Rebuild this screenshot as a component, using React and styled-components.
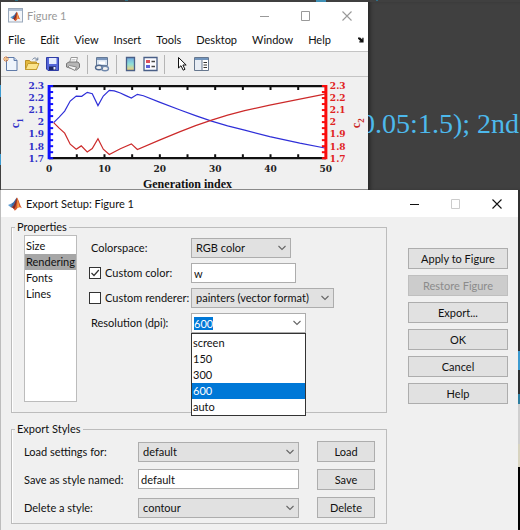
import React, { useEffect, useRef, useState } from "react";
import styled, { createGlobalStyle, css } from "styled-components";

const GlobalStyle = createGlobalStyle`
  * { box-sizing: border-box; }
  html, body { height: 100%; margin: 0; background: #404040; }
  body, button, input, select {
    font-family: Lato, "Open Sans", sans-serif;
    font-size: 11px;
    line-height: 16px;
    color: #111;
  }
  #root { min-height: 100%; display: flex; flex-direction: column; }
`;

/* ---------- desktop ---------- */

const Desktop = styled.main`
  flex: 1;
  display: flex;
  flex-direction: column;
  min-height: 100vh;
  padding-top: 2px;
  overflow: hidden;
  background:
    linear-gradient(#3f8fb4, #3f8fb4) 316px 0 / 10px 2px no-repeat,
    linear-gradient(#2d6f88, #2d6f88) 15px 0 / 3px 1px no-repeat,
    linear-gradient(#2d6f88, #2d6f88) 125px 0 / 3px 1px no-repeat,
    linear-gradient(#2d6f88, #2d6f88) 376px 0 / 2px 1px no-repeat,
    linear-gradient(#3d9bd0, #3d9bd0) 0 85px / 1px 12px no-repeat,
    linear-gradient(#3d9bd0, #3d9bd0) 0 154px / 1px 11px no-repeat,
    #404040;
`;

const BackRow = styled.div`
  display: flex;
  padding-left: 1px;
`;

const Backdrop = styled.div`
  flex: 1 1 0;
  min-width: 0;
  overflow: hidden;
  display: flex;
  justify-content: flex-end;
  align-items: center;
  padding: 56px 1px 0 0;
  white-space: nowrap;
  font: 28px/32px "Liberation Serif", serif;
  color: #4db9ec;
  box-shadow: inset 4px 0 4px -2px #262626;
`;

const FigureWindow = styled.section`
  flex: 0 1 367px;
  background: #f0f0f0;
  border-bottom: 1px solid #8a8a8a;
`;

const DialogRow = styled.div`
  flex: 1;
  display: flex;
  padding-right: 2px;
  background: linear-gradient(
    #303030 0 161px, #3d9bd0 161px 180px, #303030 180px 204px, #2d7fa0 204px 214px,
    #cfcfcf 214px 254px, #d8d4c0 254px 277px, #000 277px
  ) right / 2px 100% no-repeat;
`;

const DialogWindow = styled.section`
  flex: 1;
  background: #f0f0f0;
  border-left: 1px solid #bdbdbd;
`;

/* ---------- window chrome ---------- */

const TitleBar = styled.header`
  display: flex;
  align-items: center;
  height: 27px;
  padding: 0 ${(p) => p.$end}px 0 7px;
  background: #fff;
  color: ${(p) => (p.$inactive ? "#999" : "#111")};
`;

const Title = styled.h1`
  flex: 1;
  margin: 0 0 0 4px;
  font-size: 11px;
  font-weight: 400;
  white-space: nowrap;
`;

const WindowControls = styled.div`
  display: flex;
  gap: 25px;
`;

const ControlButton = styled.button`
  display: flex;
  padding: 0;
  border: 0;
  background: none;
  color: ${(p) => p.$tone};
`;

const MenuBar = styled.nav`
  display: flex;
  align-items: center;
  gap: 15px;
  height: 22px;
  padding: 0 4px 0 7px;
  background: #fff;
`;

const MenuItem = styled.button`
  padding: 0;
  border: 0;
  background: none;
  &:last-child { margin-left: auto; display: flex; }
`;

const Toolbar = styled.div`
  display: flex;
  align-items: center;
  gap: 5px;
  height: 26px;
  padding-left: 2px;
  border-top: 1px solid #c4c4c4;
  border-bottom: 1px solid #c4c4c4;
`;

const ToolButton = styled.button`
  display: flex;
  padding: 0;
  border: 0;
  background: none;
`;

const Separator = styled.span`
  width: 1px;
  height: 19px;
  margin: 0 1px;
  background: #b5b5b5;
`;

const Chart = styled.svg`
  display: block;
  width: 100%;
  height: auto;
`;

/* ---------- dialog parts ---------- */

const DialogBody = styled.div`
  display: flex;
  gap: 21px;
  padding: 3px 10px 5px 10px;
`;

const Panels = styled.div`
  flex: 1;
  min-width: 0;
  display: flex;
  flex-direction: column;
  gap: 9px;
`;

const Panel = styled.fieldset`
  min-width: 0;
  margin: 0;
  padding: 0;
  border: 1px solid #bcbcbc;
  box-shadow: inset 1px 0 #fff;
`;

const Legend = styled.legend`
  margin-left: 3px;
  padding: 0 2px;
  line-height: 14px;
`;

const PropertiesLayout = styled.div`
  display: flex;
  gap: 12px;
  padding: 1px 12px 10px;
`;

const CategoryList = styled.ul`
  flex: none;
  width: 53px;
  height: 167px;
  margin: 0;
  padding: 2px 0;
  list-style: none;
  background: #fff;
  border: 1px solid #bcbcbc;
`;

const Category = styled.button`
  display: block;
  width: 100%;
  padding: 0 1px;
  border: 0;
  text-align: left;
  white-space: nowrap;
  background: ${(p) => (p.$active ? "#a6a6a6" : "transparent")};
`;

const PropertyGrid = styled.div`
  flex: 1;
  display: grid;
  grid-template-columns: 102px auto;
  grid-auto-rows: 20px;
  align-content: start;
  justify-content: start;
  row-gap: 5px;
  padding-top: 3px;
`;

const StyleGrid = styled.div`
  display: grid;
  grid-template-columns: 114px 1fr 58px;
  grid-auto-rows: 21px;
  row-gap: 7px;
  padding: 5px 11px 5px 12px;
`;

const FieldLabel = styled.label`
  display: flex;
  align-items: center;
  gap: 4px;
  padding-left: ${(p) => (p.$indent ? "2px" : "0")};
  white-space: nowrap;
`;

const CheckBox = styled.input`
  appearance: none;
  flex: none;
  width: 12px;
  height: 12px;
  margin: 0;
  border: 1px solid #333;
  background: #fff;
  &:checked {
    background: #fff
      url("data:image/svg+xml,%3Csvg xmlns='http://www.w3.org/2000/svg' viewBox='0 0 10 10'%3E%3Cpath d='M1.5 5 4 7.5 8.8 2' fill='none' stroke='%23333' stroke-width='1.2'/%3E%3C/svg%3E")
      center / 10px 10px;
  }
`;

const frame = css`
  width: 100%;
  height: 20px;
  border: 1px solid #adadad;
  border-radius: 0;
`;

const SelectWrap = styled.div`
  display: grid;
  align-items: center;
  width: ${(p) => p.$width};
  & > * { grid-area: 1 / 1; }
  & > svg { justify-self: end; margin-right: 4px; pointer-events: none; }
`;

const Select = styled.select`
  ${frame}
  appearance: none;
  padding: 0 18px 0 4px;
  background: #e1e1e1;
`;

const TextField = styled.input`
  ${frame}
  width: ${(p) => p.$width};
  padding: 0 2px;
  background: #fff;
`;

const ComboBox = styled(SelectWrap)`
  position: relative;
`;

const ComboInput = styled.input`
  ${frame}
  padding: 0 2px;
  background: #fff;
  outline: none;
  &::selection { background: #0078d7; color: #fff; }
`;

const ComboList = styled.ul`
  position: absolute;
  z-index: 1;
  top: 100%;
  left: 0;
  right: 0;
  margin: 0;
  padding: 1px 0 0;
  list-style: none;
  background: #fff;
  border: 1px solid #333;
`;

const ComboOption = styled.li`
  padding-left: 1px;
  background: ${(p) => (p.$active ? "#0078d7" : "#fff")};
  color: ${(p) => (p.$active ? "#fff" : "#111")};
`;

const Actions = styled.div`
  flex: none;
  width: 100px;
  display: flex;
  flex-direction: column;
  gap: 6px;
  padding-top: 28px;
`;

const PushButton = styled.button`
  width: 100%;
  height: 21px;
  padding: 0;
  border: 1px solid #adadad;
  background: #e1e1e1;
  &:disabled { background: #ccc; border-color: #bfbfbf; color: #8b8b8b; }
`;

/* ---------- drawings ---------- */

const MatlabMark = () => (
  <>
    <path d="M0 8 4 6.2 6 8.2 3 10.5Z" fill="#5b9bd0" />
    <path d="M4 6.2C6 5.5 7 2 9 .5L7.5 7 5.8 9.4 3 10.5Z" fill="#3a6ca8" />
    <path d="M9 .4C10.5 1.8 12 8.5 14 11.2 12 10 10.5 9.8 9 11.5 8 13 7.2 13.5 6.5 13.5 6 11.8 5 10.8 3.5 10.3 6.5 9.3 7.2 4.2 9 .4Z" fill="#d8562a" />
    <path d="M9 .4C8.9 4 8.4 8.500 6 12.2 5.500 11.200 4.700 10.700 3.500 10.300 6.500 9.300 7.200 4.200 9 .4Z" fill="#7c2c2c" />
    <path d="M9.200 1.400C10.500 4 10.800 8 11.500 9.800L9 10.900C9.600 8 9.500 4 9.200 1.400Z" fill="#f5a549" />
  </>
);

const MatlabLogo = () => (
  <svg width="14" height="14" viewBox="0 0 14 14" aria-hidden="true"><MatlabMark /></svg>
);

const FigureLogo = () => (
  <svg width="15" height="15" viewBox="0 0 15 15" aria-hidden="true">
    <rect x=".5" y=".5" width="14" height="13.5" fill="#f3f6fa" stroke="#9aa9bb" />
    <path d="M1 1h13v2H1z" fill="#aebfd4" />
    <g transform="translate(2.3 3.4) scale(.72)"><MatlabMark /></g>
  </svg>
);

const MinimizeGlyph = () => (
  <svg width="16" height="12" viewBox="0 0 16 12"><path d="M3 6.5h9" stroke="currentColor" /></svg>
);
const MaximizeGlyph = () => (
  <svg width="16" height="12" viewBox="0 0 16 12"><path d="M3.5 1.5h8v9h-8z" fill="none" stroke="currentColor" /></svg>
);
const CloseGlyph = () => (
  <svg width="16" height="12" viewBox="0 0 16 12"><path d="m3.5 1.5 9 9m0-9-9 9" stroke="currentColor" strokeWidth="1.1" /></svg>
);
const Chevron = () => (
  <svg width="10" height="6" viewBox="0 0 10 6" aria-hidden="true"><path d="m1.5 1 3.5 3.5L8.5 1" fill="none" stroke="#666" strokeWidth="1.1" /></svg>
);
const DockArrow = () => (
  <svg width="6" height="6" viewBox="0 0 7 7"><path d="M0 .5h2.5L5 3V1h1.500v5.500H1.500V5H3L0 2Z" fill="#111" /></svg>
);

const NewIcon = () => (
  <svg width="16" height="16" viewBox="0 0 16 16">
    <path d="M3.5 1.5h7.5l3 3V14.500H3.500Z" fill="#eef4fc" stroke="#5f7aa8" />
    <path d="M11 1.500v3h3" fill="#c4d4ea" stroke="#5f7aa8" />
    <path d="M3 0v6M0 3h6M1 1l4 4m0-4L1 5" stroke="#d2793c" strokeWidth=".9" />
    <circle cx="3" cy="3" r="1" fill="#ffd98a" />
  </svg>
);
const OpenIcon = () => (
  <svg width="16" height="16" viewBox="0 0 16 16">
    <path d="M1.5 13.5v-9h4l1.200 1.500H12.500v7.500Z" fill="#e4b93e" stroke="#b98f24" />
    <path d="M1.500 13.500 4 7.500h11l-2.500 6Z" fill="#fbe48c" stroke="#c59c2e" />
    <path d="M8.500 3.500C10 1.500 12 1.500 13 3.500m.8-2V4h-2.500" fill="none" stroke="#5b718f" strokeWidth=".9" />
  </svg>
);
const SaveIcon = () => (
  <svg width="15" height="16" viewBox="0 0 15 16">
    <path d="M1.5 1.5h12v13H3l-1.500-1.500Z" fill="#5566d8" stroke="#2f3da5" />
    <path d="M4 2h7.500v6H4z" fill="#e6ecfd" />
    <path d="M4 10.500h7V14H4z" fill="#1c2460" /><path d="M8.500 11h2v2.500h-2z" fill="#e9edff" />
  </svg>
);
const PrintIcon = () => (
  <svg width="16" height="16" viewBox="0 0 16 16">
    <path d="M4.500 7 6 1.500h6.500L11 7Z" fill="#fff" stroke="#999" />
    <path d="M1.500 7.500 4 6h9l1.500 2v3.500l-3 2.500L1.500 11Z" fill="#b6b6b6" stroke="#777" />
    <path d="m3 11 1.500-1.500 7 1.500-1.500 3.500Z" fill="#f4f4f4" stroke="#888" />
    <path d="M6.500 3.500h4M6 5h4" stroke="#bbb" strokeWidth=".7" />
  </svg>
);
const LinkIcon = () => (
  <svg width="16" height="16" viewBox="0 0 16 16">
    <path d="M2.500 1.500h11v8h-11z" fill="#dbe6f3" stroke="#657995" /><path d="M3 2h10v2H3z" fill="#7a96bd" />
    <path d="M5 5.500h6v2.500H5z" fill="#fff" />
    <ellipse cx="5" cy="11.500" rx="3.500" ry="2.200" fill="none" stroke="#50688e" strokeWidth="1.4" />
    <ellipse cx="11" cy="12.500" rx="3.500" ry="2.200" fill="none" stroke="#7089ad" strokeWidth="1.4" />
  </svg>
);
const ColorbarIcon = () => (
  <svg width="15" height="16" viewBox="0 0 15 16">
    <defs><linearGradient id="bar" x2="0" y2="1"><stop stopColor="#71a7e0" /><stop offset=".5" stopColor="#8fe0d8" /><stop offset="1" stopColor="#f5cf74" /></linearGradient></defs>
    <path d="M3.500 1.500h8v13h-8z" fill="url(#bar)" stroke="#4a5f87" strokeWidth="1.3" />
  </svg>
);
const LegendIcon = () => (
  <svg width="15" height="16" viewBox="0 0 15 16">
    <path d="M1 1.500h13v13H1z" fill="#fbfbff" stroke="#4a5f87" strokeWidth="1.3" />
    <path d="M3 4h4v3H3z" fill="#dc4f5a" /><path d="M3 9h4v3H3z" fill="#5a5fd8" />
    <path d="M8.500 5.500H12m-3.500 5H12" stroke="#444" strokeWidth="1.3" />
  </svg>
);
const PointerIcon = () => (
  <svg width="18" height="16" viewBox="0 0 18 16"><path d="M7.500 1.500v10.500l2.500-2.300 2.200 4.500 1.800-.9-2.100-4.300h3.300Z" fill="#fff" stroke="#111" /></svg>
);
const InspectorIcon = () => (
  <svg width="15" height="16" viewBox="0 0 15 16">
    <path d="M.5 1.500h14v13H.5z" fill="#e8edf4" stroke="#66778e" /><path d="M1 2h13v2H1z" fill="#7295bd" />
    <path d="M8 4h6v10H8z" fill="#fff" /><path d="M8 4v10" stroke="#66778e" />
    <path d="M9.500 6.500H13m-3.500 2.500H13m-3.500 2.500H13" stroke="#333" strokeWidth="1.2" />
  </svg>
);

/* ---------- chart ---------- */

const C1 = "54.5,122.5 60,117 65.5,111 71,101 77,96 82.5,96.3 88,92.3 93,93.7 98.7,105.5 104,96 110,90.3 115,90.8 121,93 126,95.3 132,98 138,94.3 144,95.7 160,102 180,109.7 196,115.5 212,121 228,125.7 245,130 270,136.5 300,143 325,147.8";
const C2 = "54.5,122.5 60,128 65.5,133 71,144 77,149 82,145.7 88,151.7 93,148.3 98.7,138.5 104,149 110,154.3 121,148.5 132,143.7 138,149.3 160,140 180,131.7 196,125.5 212,120 228,115 245,110.5 270,105 300,99 325,94";
const Y_LABELS = ["2.3", "2.2", "2.1", "2", "1.9", "1.8", "1.7"];
const X_LABELS = [0, 10, 20, 30, 40, 50];

const TickText = styled.text`
  font: 700 9px "DejaVu Serif", serif;
  fill: ${(p) => p.$fill};
`;
const AxisText = styled.text`
  font: 700 12px "Liberation Serif", serif;
  fill: ${(p) => p.$fill};
`;
const Subscript = styled.tspan`
  font-size: 9px;
`;

function FigureChart() {
  const xTicks = Array.from({ length: 9 }, (_, i) => 50 + (i + 1) * 27.6);
  const yTicks = Array.from({ length: 13 }, (_, i) => 86 + i * 6);
  return (
    <Chart viewBox="2 77 366 112" role="img" aria-label="c1 and c2 against generation index">
      <rect x="50" y="86" width="276" height="72" fill="#fff" />
      <path d="M50 86H326M50 158H326" stroke="#111" strokeWidth="2.2" />
      {xTicks.map((x) => <path key={x} d={`M${x} 86v4M${x} 158v-4`} stroke="#111" strokeWidth="2" />)}
      <polyline points={C1} fill="none" stroke="#2f2fd8" strokeWidth="1.2" />
      <polyline points={C2} fill="none" stroke="#cc2a2a" strokeWidth="1.2" />
      <path d="M50 85V159" stroke="#1010ff" strokeWidth="3" />
      <path d="M326 85V159" stroke="#fa0c0c" strokeWidth="3" />
      {yTicks.map((y) => (
        <g key={y} strokeWidth="2"><path d={`M50 ${y}h4`} stroke="#1010ff" /><path d={`M326 ${y}h-4`} stroke="#fa0c0c" /></g>
      ))}
      {Y_LABELS.map((t, i) => (
        <g key={t}>
          <TickText x="45" y={88.5 + i * 12.2} textAnchor="end" $fill="#3030c8">{t}</TickText>
          <TickText x="330" y={88.5 + i * 12.2} $fill="#e02222">{t}</TickText>
        </g>
      ))}
      {X_LABELS.map((t, i) => <TickText key={t} x={50 + i * 55.2} y="172" textAnchor="middle" $fill="#222">{t}</TickText>)}
      <AxisText x="188" y="188" textAnchor="middle" $fill="#111">Generation index</AxisText>
      <AxisText transform="translate(20 128) rotate(-90)" $fill="#3030c8">c<Subscript dy="4">1</Subscript></AxisText>
      <AxisText transform="translate(360 128) rotate(-90)" $fill="#c82222">c<Subscript dy="4">2</Subscript></AxisText>
    </Chart>
  );
}

/* ---------- composition ---------- */

const MENUS = ["File", "Edit", "View", "Insert", "Tools", "Desktop", "Window", "Help"];
const TOOLS = [
  ["New Figure", NewIcon], ["Open File", OpenIcon], ["Save Figure", SaveIcon], ["Print Figure", PrintIcon], null,
  ["Link Plot", LinkIcon], null, ["Insert Colorbar", ColorbarIcon], ["Insert Legend", LegendIcon], null,
  ["Edit Plot", PointerIcon], ["Property Inspector", InspectorIcon],
];
const CATEGORIES = ["Size", "Rendering", "Fonts", "Lines"];
const RESOLUTIONS = ["screen", "150", "300", "600", "auto"];
const ACTIONS = ["Apply to Figure", "Restore Figure", "Export...", "OK", "Cancel", "Help"];

function Controls({ tone, maximizeTone = tone }) {
  return (
    <WindowControls>
      <ControlButton $tone={tone} aria-label="Minimize"><MinimizeGlyph /></ControlButton>
      <ControlButton $tone={maximizeTone} aria-label="Maximize"><MaximizeGlyph /></ControlButton>
      <ControlButton $tone={tone} aria-label="Close"><CloseGlyph /></ControlButton>
    </WindowControls>
  );
}

function DropDown({ id, value, label, width = "100%" }) {
  return (
    <SelectWrap $width={width}>
      <Select id={id} aria-label={label} defaultValue={value}><option>{value}</option></Select>
      <Chevron />
    </SelectWrap>
  );
}

function ResolutionCombo() {
  const [value, setValue] = useState("600");
  const input = useRef(null);
  useEffect(() => {
    input.current.focus();
    input.current.select();
  }, []);
  return (
    <ComboBox $width="115px">
      <ComboInput id="resolution" ref={input} role="combobox" aria-expanded="true" aria-controls="resolutions"
        value={value} onChange={(e) => setValue(e.target.value)} />
      <Chevron />
      <ComboList id="resolutions" role="listbox">
        {RESOLUTIONS.map((r) => (
          <ComboOption key={r} role="option" aria-selected={r === value} $active={r === value} onClick={() => setValue(r)}>{r}</ComboOption>
        ))}
      </ComboList>
    </ComboBox>
  );
}

export default function App() {
  const [category, setCategory] = useState("Rendering");
  return (
    <>
      <GlobalStyle />
      <Desktop>
        <BackRow>
          <FigureWindow aria-label="Figure 1">
            <TitleBar $inactive $end={13}>
              <FigureLogo /><Title>Figure 1</Title><Controls tone="#999" />
            </TitleBar>
            <MenuBar>
              {MENUS.map((m) => <MenuItem key={m}>{m}</MenuItem>)}
              <MenuItem aria-label="Dock figure"><DockArrow /></MenuItem>
            </MenuBar>
            <Toolbar>
              {TOOLS.map((tool, i) => {
                if (!tool) return <Separator key={i} />;
                const [label, Icon] = tool;
                return <ToolButton key={label} aria-label={label}><Icon /></ToolButton>;
              })}
            </Toolbar>
            <FigureChart />
          </FigureWindow>
          <Backdrop>0.05:1.5); 2nd</Backdrop>
        </BackRow>
        <DialogRow>
          <DialogWindow role="dialog" aria-label="Export Setup: Figure 1">
            <TitleBar $end={13}>
              <MatlabLogo /><Title>Export Setup: Figure 1</Title><Controls tone="#111" maximizeTone="#ccc" />
            </TitleBar>
            <DialogBody>
              <Panels>
                <Panel>
                  <Legend>Properties</Legend>
                  <PropertiesLayout>
                    <CategoryList>
                      {CATEGORIES.map((c) => (
                        <li key={c}><Category $active={c === category} aria-pressed={c === category} onClick={() => setCategory(c)}>{c}</Category></li>
                      ))}
                    </CategoryList>
                    <PropertyGrid>
                      <FieldLabel $indent htmlFor="colorspace">Colorspace:</FieldLabel>
                      <DropDown id="colorspace" value="RGB color" width="100px" />
                      <FieldLabel><CheckBox type="checkbox" defaultChecked />Custom color:</FieldLabel>
                      <TextField aria-label="Custom color value" defaultValue="w" $width="105px" />
                      <FieldLabel><CheckBox type="checkbox" />Custom renderer:</FieldLabel>
                      <DropDown id="renderer" label="Renderer" value="painters (vector format)" width="143px" />
                      <FieldLabel $indent htmlFor="resolution">Resolution (dpi):</FieldLabel>
                      <ResolutionCombo />
                    </PropertyGrid>
                  </PropertiesLayout>
                </Panel>
                <Panel>
                  <Legend>Export Styles</Legend>
                  <StyleGrid>
                    <FieldLabel htmlFor="load">Load settings for:</FieldLabel>
                    <DropDown id="load" value="default" width="calc(100% - 18px)" />
                    <PushButton>Load</PushButton>
                    <FieldLabel htmlFor="save">Save as style named:</FieldLabel>
                    <TextField id="save" defaultValue="default" $width="calc(100% - 18px)" />
                    <PushButton>Save</PushButton>
                    <FieldLabel htmlFor="delete">Delete a style:</FieldLabel>
                    <DropDown id="delete" value="contour" width="calc(100% - 18px)" />
                    <PushButton>Delete</PushButton>
                  </StyleGrid>
                </Panel>
              </Panels>
              <Actions>
                {ACTIONS.map((a) => <PushButton key={a} disabled={a === "Restore Figure"}>{a}</PushButton>)}
              </Actions>
            </DialogBody>
          </DialogWindow>
        </DialogRow>
      </Desktop>
    </>
  );
}
